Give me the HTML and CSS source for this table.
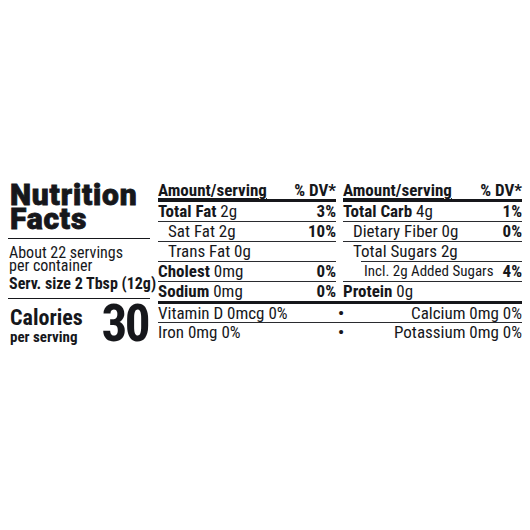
FILE: index.html
```html
<!DOCTYPE html>
<html>
<head>
<meta charset="utf-8">
<link rel="stylesheet" href="styles.css">
</head>
<body>
<div class="label">
  <div class="left">
    <div class="title">Nutrition<br>Facts</div>
    <div class="servings">
      <div class="about">About 22 servings<br>per container</div>
      <div class="size">Serv. size 2 Tbsp (12g)</div>
    </div>
    <div class="calories">
      <div class="cal-text">
        <div class="cal-word">Calories</div>
        <div class="cal-per">per serving</div>
      </div>
      <div class="cal-num">30</div>
    </div>
  </div>
  <div class="main">
    <div class="cols">
      <div class="col">
        <div class="head"><span class="amt">Amount/serving</span><b>% DV*</b></div>
        <div class="row"><span><b>Total Fat</b> 2g</span><b>3%</b></div>
        <div class="row ind1"><span>Sat Fat 2g</span><b>10%</b></div>
        <div class="row ind1"><span>Trans Fat 0g</span></div>
        <div class="row"><span><b>Cholest</b> 0mg</span><b>0%</b></div>
        <div class="row last"><span><b>Sodium</b> 0mg</span><b>0%</b></div>
      </div>
      <div class="col">
        <div class="head"><span class="amt">Amount/serving</span><b>% DV*</b></div>
        <div class="row"><span><b>Total Carb</b> 4g</span><b>1%</b></div>
        <div class="row ind1"><span>Dietary Fiber 0g</span><b>0%</b></div>
        <div class="row ind1 sugars"><span>Total Sugars 2g</span></div>
        <div class="row ind2"><span class="small">Incl. 2g Added Sugars</span><b>4%</b></div>
        <div class="row last"><span><b>Protein</b> 0g</span></div>
      </div>
    </div>
    <div class="vitamins">
      <div class="vrow"><span>Vitamin D 0mcg 0%</span><span class="dot">•</span><span class="vr">Calcium 0mg 0%</span></div>
      <div class="vrow last"><span>Iron 0mg 0%</span><span class="dot">•</span><span class="vr">Potassium 0mg 0%</span></div>
    </div>
  </div>
</div>
</body>
</html>
```

FILE: styles.css
```css
html, body {
  margin: 0;
  padding: 0;
  background: #ffffff;
}
body {
  width: 530px;
  height: 530px;
  color: #16171b;
  font-family: Roboto, "Liberation Sans", sans-serif;
  font-stretch: 82%;
}
b {
  font-weight: 700;
}
.label {
  display: flex;
  gap: 8px;
  padding: 181px 8px 0 8px;
}
.left {
  width: 142px;
  flex: none;
}
.title {
  font-weight: 900;
  font-stretch: 100%;
  font-size: 30px;
  line-height: 24px;
  letter-spacing: 0.8px;
  -webkit-text-stroke: 0.8px #16171b;
  padding: 2px 0 7px 2px;
  border-bottom: 1px solid #16171b;
}
.servings {
  padding: 6px 0 5px 1px;
  border-bottom: 1px solid #16171b;
}
.about {
  font-size: 16px;
  font-stretch: 75%;
  line-height: 13px;
  padding-top: 1px;
}
.size {
  font-size: 16px;
  font-weight: 700;
  font-stretch: 75%;
  line-height: 18px;
  margin-top: 3px;
  white-space: nowrap;
}
.calories {
  display: flex;
  justify-content: space-between;
  align-items: flex-start;
  padding: 7px 2px 0 2px;
}
.cal-word {
  font-size: 22px;
  font-weight: 700;
  font-stretch: 75%;
  line-height: 24px;
}
.cal-per {
  font-size: 15px;
  font-weight: 700;
  font-stretch: 75%;
  line-height: 14px;
}
.cal-num {
  font-size: 51px;
  font-weight: 700;
  font-stretch: 75%;
  line-height: 42px;
  letter-spacing: -2.5px;
  margin-top: -3px;
}
.main {
  flex: 1;
}
.cols {
  display: grid;
  grid-template-columns: 178px 179px;
  column-gap: 7px;
}
.head {
  display: flex;
  justify-content: space-between;
  font-size: 17px;
  font-weight: 700;
  line-height: 18px;
  border-bottom: 3px solid #16171b;
}
.amt {
  text-decoration: underline;
  text-decoration-thickness: 1px;
  text-underline-offset: 2px;
}
.row {
  display: flex;
  justify-content: space-between;
  font-size: 17px;
  line-height: 19px;
  border-bottom: 1px solid #2a2b2f;
}
.row.last {
  border-bottom: 0;
}
.ind1 span {
  padding-left: 10px;
}
.ind2 span {
  padding-left: 21px;
}
.sugars {
  display: block;
  border-bottom: 0;
}
.sugars::after {
  content: "";
  display: block;
  margin-left: 18px;
  border-bottom: 1px solid #2a2b2f;
}
.small {
  font-size: 15px;
  font-stretch: 75%;
}
.vitamins {
  border-top: 3px solid #16171b;
}
.vrow {
  display: grid;
  grid-template-columns: 1fr auto 1fr;
  align-items: center;
  font-size: 17px;
  line-height: 18px;
  border-bottom: 1px solid #2a2b2f;
}
.vrow.last {
  border-bottom: 0;
}
.dot {
  font-size: 17px;
  font-weight: 700;
  line-height: 16px;
  padding: 0 4px 0 6px;
}
.vr {
  text-align: right;
}
```
